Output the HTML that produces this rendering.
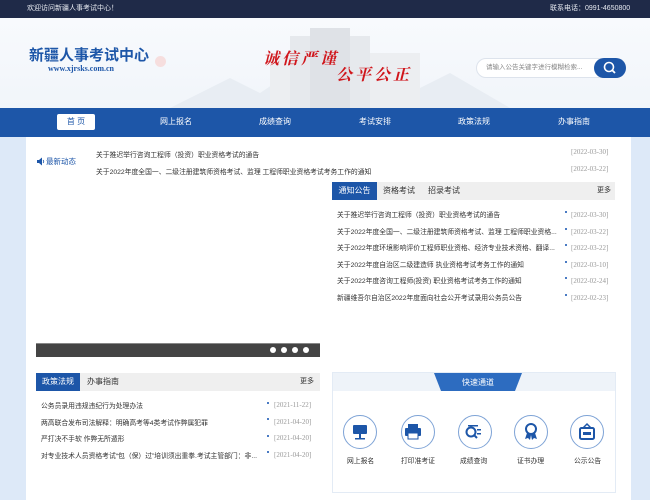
<!DOCTYPE html>
<html><head><meta charset="utf-8"><style>
*{margin:0;padding:0;box-sizing:border-box}
body{width:650px;height:500px;overflow:hidden;background:#dde9f8;font-family:"Liberation Sans","Noto Sans CJK SC",sans-serif;font-size:7px;color:#333;position:relative}
.a{position:absolute}
.top{left:0;top:0;width:650px;height:18px;background:#1f2a48;color:#e6e9f0;font-size:7px;line-height:18px}
.hdr{left:0;top:18px;width:650px;height:90px;background:linear-gradient(#f8fafd,#f1f5fa)}
.nav{left:0;top:108px;width:650px;height:29px;background:#1d56a8;color:#fff;font-size:8px}
.nav span{position:absolute;top:8px}
.main{left:26px;top:137px;width:605px;height:363px;background:#fff}
.d{color:#999;font-family:"Liberation Serif",serif;font-size:7px}
.t{font-size:6.8px;color:#333;white-space:nowrap}
.tabs{background:#efefef;height:18px}
.tab{position:absolute;top:0;height:18px;line-height:18px;font-size:8px;color:#333}
.on{background:#1d56a8;color:#fff;text-align:center}
.circ{width:34px;height:34px;border:1.5px solid #7ea3d6;border-radius:50%;background:#fff}
.dt{position:absolute;width:2px;height:2px;background:#4a7bc4}
.sl{font-size:16px;font-weight:bold;color:#d0161c;font-family:'Noto Serif CJK SC',serif;font-style:italic;letter-spacing:3px}
</style></head><body>
<div class="a top"><span class="a" style="left:27px">欢迎访问新疆人事考试中心！</span><span class="a" style="left:550px">联系电话：0991-4650800</span></div>
<div class="a hdr">
<svg class="a" style="left:150px;top:0" width="360" height="90"><path d="M20 90 L80 60 L110 75 L140 55 L170 70 L210 50 L250 80 L300 55 L360 90Z" fill="#e8edf3"/><rect x="120" y="35" width="150" height="55" fill="#eceef1"/><rect x="140" y="18" width="80" height="72" fill="#e6e9ed"/><rect x="160" y="10" width="40" height="80" fill="#dfe2e7"/></svg>
<div class="a" style="left:155px;top:38px;width:11px;height:11px;border-radius:50%;background:#f6dede"></div>
<div class="a" style="left:29px;top:26px;font-size:15px;font-weight:bold;color:#1d56a8">新疆人事考试中心</div>
<div class="a" style="left:48px;top:46px;font-size:8px;font-weight:bold;color:#1d56a8;font-family:'Liberation Serif',serif">www.xjrsks.com.cn</div>
<div class="a sl" style="left:263px;top:28px">诚信严谨</div>
<div class="a sl" style="left:336px;top:44px">公平公正</div>
<div class="a" style="left:476px;top:40px;width:140px;height:20px;background:#fff;border:1px solid #dde3ec;border-radius:10px;font-size:6.5px;color:#888;line-height:18px;padding-left:9px">请输入公告关键字进行模糊检索...</div>
<div class="a" style="left:594px;top:40px;width:32px;height:20px;background:#1d56a8;border-radius:10px"><svg width="32" height="20"><circle cx="15" cy="9" r="4.5" stroke="#fff" stroke-width="1.6" fill="none"/><path d="M18 12 L21 15" stroke="#fff" stroke-width="1.8"/></svg></div>
</div>
<div class="a nav">
<div class="a" style="left:57px;top:6px;width:38px;height:16px;background:#fff;border-radius:2px;color:#1d56a8;text-align:center;line-height:16px">首 页</div>
<span style="left:160px">网上报名</span><span style="left:259px">成绩查询</span><span style="left:359px">考试安排</span><span style="left:458px">政策法规</span><span style="left:558px">办事指南</span>
</div>
<div class="a main"></div>
<svg class="a" style="left:36px;top:157px" width="9" height="9"><path d="M1 3H3L6 0.5V8.5L3 6H1Z" fill="#1d56a8"/><path d="M7 3Q8.5 4.5 7 6" stroke="#1d56a8" fill="none" stroke-width="0.8"/></svg>
<div class="a" style="left:46px;top:156px;color:#1d56a8;font-size:7.5px">最新动态</div>
<div class="a t" style="left:96px;top:149px">关于推迟举行咨询工程师（投资）职业资格考试的通告</div>
<div class="a d" style="left:571px;top:148px">[2022-03-30]</div>
<div class="a t" style="left:96px;top:166px">关于2022年度全国一、二级注册建筑师资格考试、监理 工程师职业资格考试考务工作的通知</div>
<div class="a d" style="left:571px;top:165px">[2022-03-22]</div>
<div class="a tabs" style="left:332px;top:182px;width:283px"></div>
<div class="a tab on" style="left:332px;top:182px;width:45px">通知公告</div>
<div class="a tab" style="left:383px;top:182px">资格考试</div>
<div class="a tab" style="left:428px;top:182px">招录考试</div>
<div class="a tab" style="left:597px;top:182px;font-size:7px">更多</div>
<div class="a t" style="left:337px;top:209px">关于推迟举行咨询工程师（投资）职业资格考试的通告</div>
<div class="a t" style="left:337px;top:226px">关于2022年度全国一、二级注册建筑师资格考试、监理 工程师职业资格...</div>
<div class="a t" style="left:337px;top:242px">关于2022年度环境影响评价工程师职业资格、经济专业技术资格、翻译...</div>
<div class="a t" style="left:337px;top:259px">关于2022年度自治区二级建造师 执业资格考试考务工作的通知</div>
<div class="a t" style="left:337px;top:275px">关于2022年度咨询工程师(投资) 职业资格考试考务工作的通知</div>
<div class="a t" style="left:337px;top:292px">新疆维吾尔自治区2022年度面向社会公开考试录用公务员公告</div>
<div class="dt" style="left:565px;top:211px"></div><div class="dt" style="left:565px;top:228px"></div><div class="dt" style="left:565px;top:244px"></div><div class="dt" style="left:565px;top:261px"></div><div class="dt" style="left:565px;top:277px"></div><div class="dt" style="left:565px;top:294px"></div>
<div class="a d" style="left:571px;top:207px;line-height:16.5px">[2022-03-30]<br>[2022-03-22]<br>[2022-03-22]<br>[2022-03-10]<br>[2022-02-24]<br>[2022-02-23]</div>
<div class="a" style="left:36px;top:343px;width:284px;height:14px;background:#444;border-top:1px solid #888"></div>
<div class="a" style="left:270px;top:347px;width:6px;height:6px;border-radius:50%;background:#fff"></div>
<div class="a" style="left:281px;top:347px;width:6px;height:6px;border-radius:50%;background:#fff"></div>
<div class="a" style="left:292px;top:347px;width:6px;height:6px;border-radius:50%;background:#fff"></div>
<div class="a" style="left:303px;top:347px;width:6px;height:6px;border-radius:50%;background:#fff"></div>
<div class="a tabs" style="left:36px;top:373px;width:284px"></div>
<div class="a tab on" style="left:36px;top:373px;width:44px">政策法规</div>
<div class="a tab" style="left:87px;top:373px">办事指南</div>
<div class="a tab" style="left:300px;top:373px;font-size:7px">更多</div>
<div class="a t" style="left:41px;top:399px;line-height:16.5px">公务员录用违规违纪行为处理办法<br>两高联合发布司法解释：明确高考等4类考试作弊属犯罪<br>严打决不手软 作弊无所遁形<br>对专业技术人员资格考试“包（保）过”培训须出重拳.考试主管部门：非...</div>
<div class="dt" style="left:267px;top:402px"></div><div class="dt" style="left:267px;top:418px"></div><div class="dt" style="left:267px;top:435px"></div><div class="dt" style="left:267px;top:451px"></div>
<div class="a d" style="left:274px;top:397px;line-height:16.5px">[2021-11-22]<br>[2021-04-20]<br>[2021-04-20]<br>[2021-04-20]</div>
<div class="a" style="left:332px;top:372px;width:284px;height:121px;border:1px solid #e3ebf5;background:#fff"></div>
<div class="a" style="left:333px;top:373px;width:282px;height:18px;background:#eef3f9"></div>
<svg class="a" style="left:434px;top:373px" width="88" height="18"><path d="M0 0H88L81 18H7Z" fill="#2d6cc0"/><text x="44" y="12" fill="#fff" font-size="8" text-anchor="middle" font-family="Noto Sans CJK SC">快速通道</text></svg>
<div class="a circ" style="left:343px;top:415px"></div><div class="a circ" style="left:401px;top:415px"></div><div class="a circ" style="left:458px;top:415px"></div><div class="a circ" style="left:514px;top:415px"></div><div class="a circ" style="left:570px;top:415px"></div>
<svg class="a" style="left:343px;top:415px" width="260" height="34" fill="#1d56a8">
<rect x="10" y="10" width="14" height="9" rx="1"/><rect x="16" y="19" width="2" height="4"/><rect x="12" y="23" width="10" height="1.5"/>
<rect x="65" y="9" width="10" height="4"/><rect x="62" y="13" width="16" height="8" rx="1"/><rect x="65" y="18" width="10" height="6" fill="#fff" stroke="#1d56a8"/>
<circle cx="128" cy="17" r="4.5" fill="none" stroke="#1d56a8" stroke-width="2"/><path d="M131 20l3 3" stroke="#1d56a8" stroke-width="2"/><rect x="125" y="10" width="10" height="1.5"/><rect x="134" y="14" width="4" height="1.5"/><rect x="134" y="18" width="4" height="1.5"/>
<circle cx="188" cy="14" r="5" fill="none" stroke="#1d56a8" stroke-width="2"/><path d="M184 18l-2 6 3-1 2 2 1-5M192 18l2 6-3-1-2 2-1-5"/>
<rect x="237" y="13" width="14" height="11" rx="1.5" fill="none" stroke="#1d56a8" stroke-width="2"/><path d="M240 13l4-4 4 4" fill="none" stroke="#1d56a8" stroke-width="1.5"/><rect x="240" y="17" width="8" height="3"/>
</svg>
<div class="a t" style="left:347px;top:455px">网上报名</div>
<div class="a t" style="left:401px;top:455px">打印准考证</div>
<div class="a t" style="left:460px;top:455px">成绩查询</div>
<div class="a t" style="left:517px;top:455px">证书办理</div>
<div class="a t" style="left:574px;top:455px">公示公告</div>
</body></html>
